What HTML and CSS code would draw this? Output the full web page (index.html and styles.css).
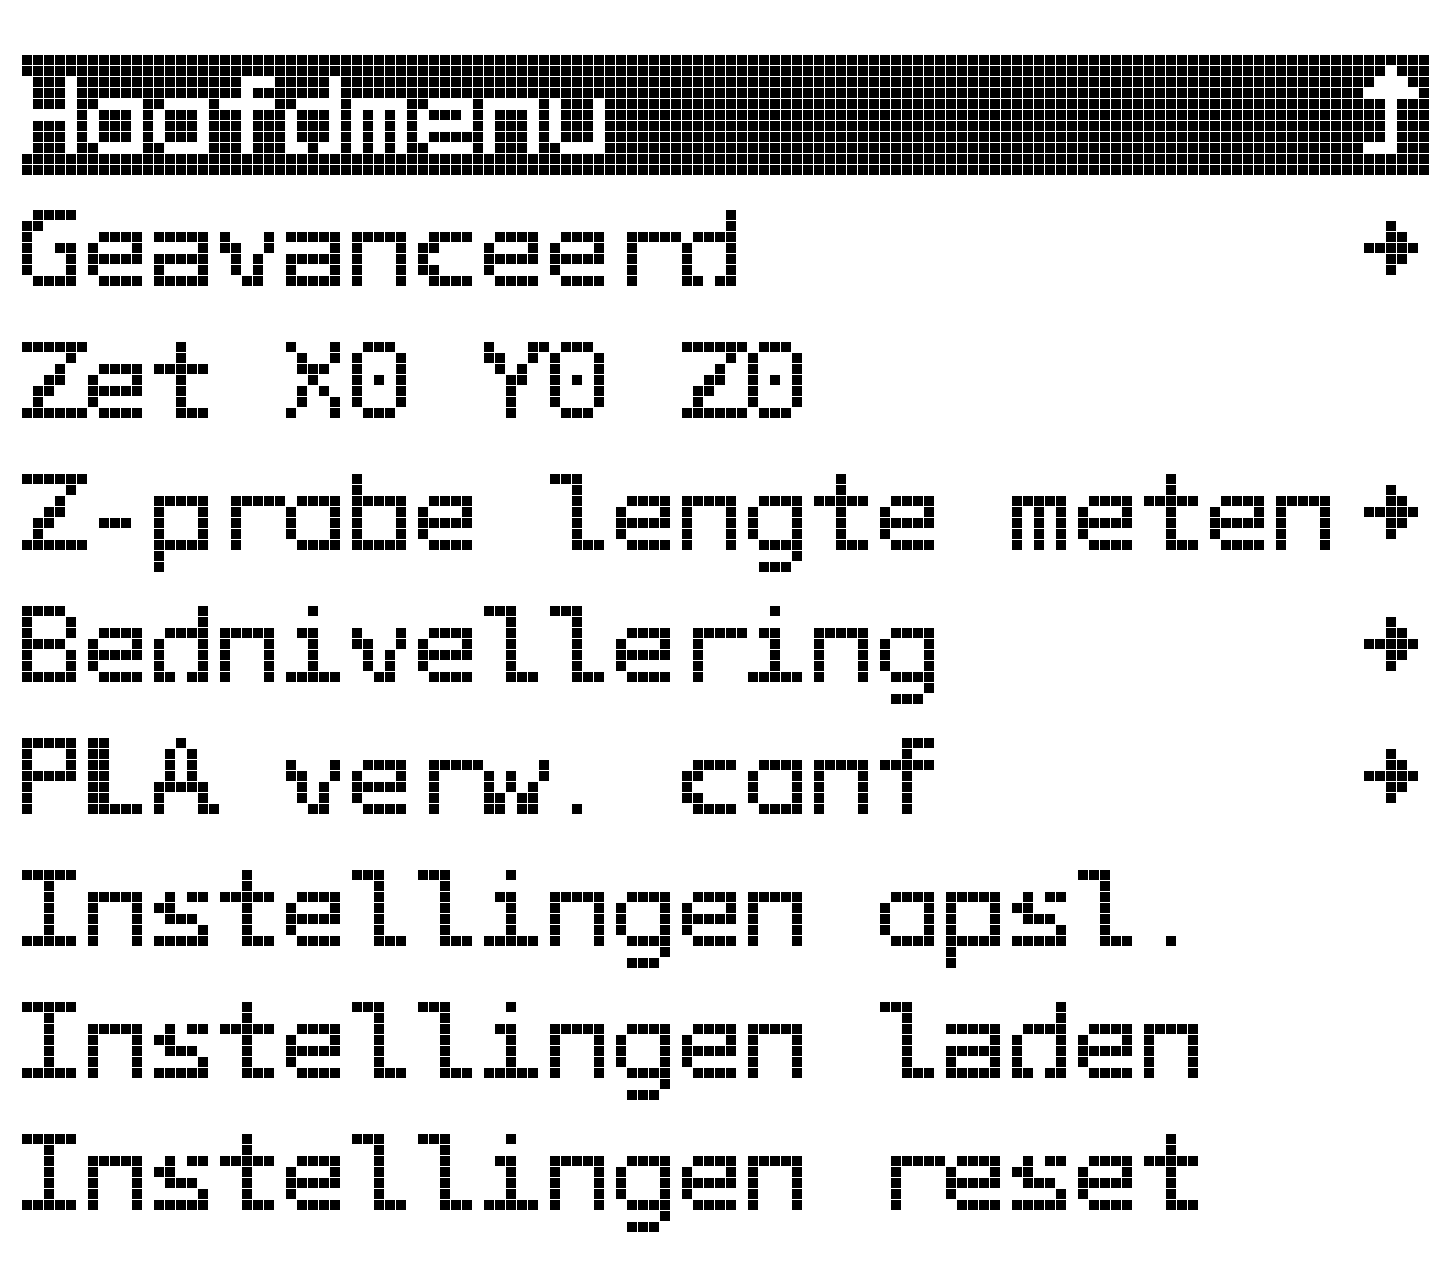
FILE: index.html
```html
<!DOCTYPE html>
<html lang="nl">
<head>
<meta charset="utf-8">
<title>Hoofdmenu</title>
<link rel="stylesheet" href="styles.css">
</head>
<body>
<svg class="defs" aria-hidden="true">
  <defs>
    <filter id="lcd" x="0" y="0" width="1" height="1" color-interpolation-filters="sRGB">
      <feFlood x="5" y="4" width="1" height="2" flood-color="#000" result="pt"/>
      <feComposite in="pt" in2="pt" operator="over" x="0" y="0" width="11" height="11" result="cell"/>
      <feTile in="cell" result="grid"/>
      <feComposite in="SourceGraphic" in2="grid" operator="in" result="samp"/>
      <feComponentTransfer in="samp" result="bin">
        <feFuncA type="discrete" tableValues="0 1 1 1"/>
      </feComponentTransfer>
      <feMorphology in="bin" operator="dilate" radius="5" result="big"/>
      <feFlood x="0" y="0" width="10" height="10" flood-color="#000" result="sq"/>
      <feComposite in="sq" in2="sq" operator="over" x="0" y="0" width="11" height="11" result="sqcell"/>
      <feTile in="sqcell" result="mask"/>
      <feComposite in="big" in2="mask" operator="in"/>
    </filter>
    <g id="subarrow" fill="#000">
      <rect x="22" y="0" width="10" height="10"/>
      <rect x="22" y="11" width="10" height="10"/><rect x="33" y="11" width="10" height="10"/>
      <rect x="0" y="22" width="10" height="10"/><rect x="11" y="22" width="10" height="10"/><rect x="22" y="22" width="10" height="10"/><rect x="33" y="22" width="10" height="10"/><rect x="44" y="22" width="10" height="10"/>
      <rect x="22" y="33" width="10" height="10"/><rect x="33" y="33" width="10" height="10"/>
      <rect x="22" y="44" width="10" height="10"/>
    </g>
  </defs>
</svg>

<div class="screen">
  <div class="titlebar">
    <div class="title-text"><span class="glyphs">Hoofdmenu</span></div>
    <svg class="uplevel" viewBox="0 0 55 88" width="55" height="88" aria-hidden="true">
      <g fill="#fff">
        <rect x="22" y="0" width="11" height="11"/>
        <rect x="11" y="11" width="11" height="11"/><rect x="22" y="11" width="11" height="11"/><rect x="33" y="11" width="11" height="11"/>
        <rect x="0" y="22" width="11" height="11"/><rect x="11" y="22" width="11" height="11"/><rect x="22" y="22" width="11" height="11"/><rect x="33" y="22" width="11" height="11"/><rect x="44" y="22" width="11" height="11"/>
        <rect x="22" y="33" width="11" height="11"/>
        <rect x="22" y="44" width="11" height="11"/>
        <rect x="22" y="55" width="11" height="11"/>
        <rect x="22" y="66" width="11" height="11"/>
        <rect x="0" y="77" width="11" height="11"/><rect x="11" y="77" width="11" height="11"/><rect x="22" y="77" width="11" height="11"/>
      </g>
    </svg>
  </div>

  <ul class="menu">
    <li class="row"><div class="row-text"><span class="glyphs">Geavanceerd</span></div><svg class="sub" viewBox="0 0 54 54" width="54" height="54" aria-hidden="true"><use href="#subarrow"/></svg></li>
    <li class="row"><div class="row-text"><span class="glyphs">Zet X0 Y0 Z0</span></div></li>
    <li class="row"><div class="row-text"><span class="glyphs">Z-probe lengte meten</span></div><svg class="sub" viewBox="0 0 54 54" width="54" height="54" aria-hidden="true"><use href="#subarrow"/></svg></li>
    <li class="row"><div class="row-text"><span class="glyphs">Bednivellering</span></div><svg class="sub" viewBox="0 0 54 54" width="54" height="54" aria-hidden="true"><use href="#subarrow"/></svg></li>
    <li class="row"><div class="row-text"><span class="glyphs">PLA verw. conf</span></div><svg class="sub" viewBox="0 0 54 54" width="54" height="54" aria-hidden="true"><use href="#subarrow"/></svg></li>
    <li class="row"><div class="row-text"><span class="glyphs">Instellingen opsl.</span></div></li>
    <li class="row"><div class="row-text"><span class="glyphs">Instellingen laden</span></div></li>
    <li class="row"><div class="row-text"><span class="glyphs">Instellingen reset</span></div></li>
  </ul>
</div>
</body>
</html>
```

FILE: styles.css
```css
html, body {
  margin: 0;
  padding: 0;
  background: #fff;
}

.defs {
  position: absolute;
  width: 0;
  height: 0;
  overflow: hidden;
}

.screen {
  width: 1408px;
  padding: 55px 0 0 22px;
}

.titlebar {
  display: flex;
  align-items: flex-start;
  height: 121px;
  background-color: #000;
  background-image:
    repeating-linear-gradient(90deg, transparent 0 10px, #fff 10px 11px),
    repeating-linear-gradient(180deg, transparent 0 10px, #fff 10px 11px);
}

.title-text {
  filter: url(#lcd);
  flex: 1;
  height: 110px;
  padding-top: 11px;
  color: #fff;
}

.uplevel {
  display: block;
  flex: none;
  margin: 11px 11px 0 0;
}

.menu {
  list-style: none;
  margin: 23px 0 0 0;
  padding: 0;
}

.row {
  display: flex;
  align-items: flex-start;
  height: 132px;
}

.row-text {
  filter: url(#lcd);
  flex: 1;
  height: 132px;
  color: #000;
}

.glyphs {
  display: inline-block;
  white-space: pre;
  font-family: "DejaVu Sans Mono", monospace;
  font-size: 106px;
  line-height: 105px;
  letter-spacing: -6.43px;
  transform-origin: 0 0;
  transform: translateX(-8px) scaleX(1.15);
}

.sub {
  display: block;
  flex: none;
  margin: 22px 12px 0 0;
}
```
